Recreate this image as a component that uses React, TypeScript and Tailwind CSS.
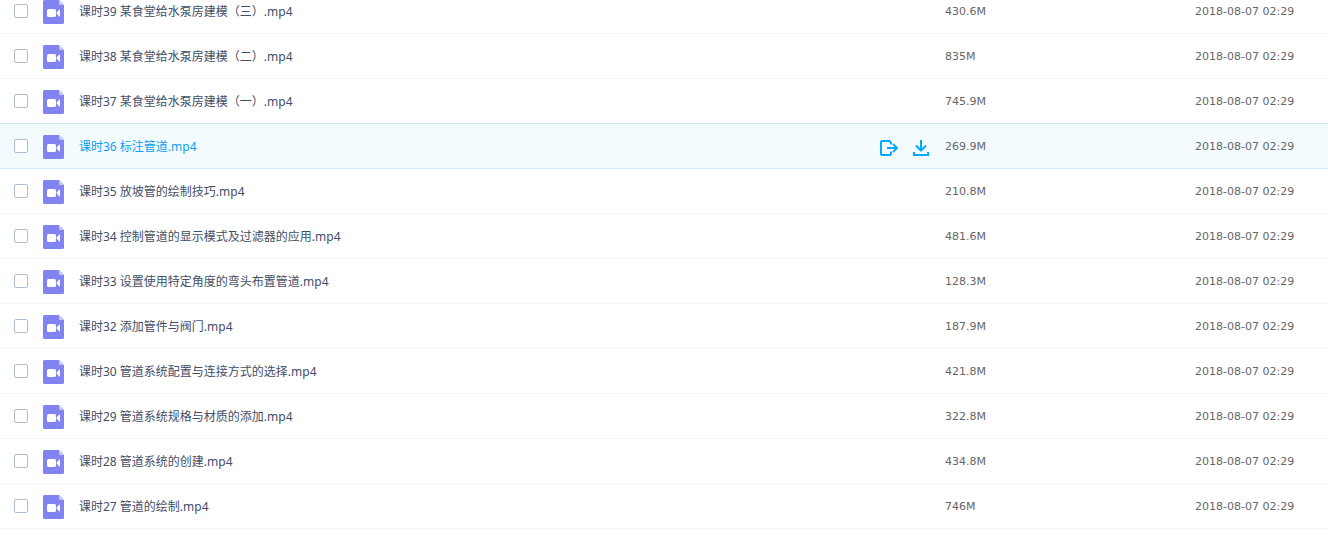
import React from 'react';

interface VideoFile {
  name: string;
  size: string;
  date: string;
}

const files: VideoFile[] = [
  { name: '课时39 某食堂给水泵房建模（三）.mp4', size: '430.6M', date: '2018-08-07 02:29' },
  { name: '课时38 某食堂给水泵房建模（二）.mp4', size: '835M', date: '2018-08-07 02:29' },
  { name: '课时37 某食堂给水泵房建模（一）.mp4', size: '745.9M', date: '2018-08-07 02:29' },
  { name: '课时36 标注管道.mp4', size: '269.9M', date: '2018-08-07 02:29' },
  { name: '课时35 放坡管的绘制技巧.mp4', size: '210.8M', date: '2018-08-07 02:29' },
  { name: '课时34 控制管道的显示模式及过滤器的应用.mp4', size: '481.6M', date: '2018-08-07 02:29' },
  { name: '课时33 设置使用特定角度的弯头布置管道.mp4', size: '128.3M', date: '2018-08-07 02:29' },
  { name: '课时32 添加管件与阀门.mp4', size: '187.9M', date: '2018-08-07 02:29' },
  { name: '课时30 管道系统配置与连接方式的选择.mp4', size: '421.8M', date: '2018-08-07 02:29' },
  { name: '课时29 管道系统规格与材质的添加.mp4', size: '322.8M', date: '2018-08-07 02:29' },
  { name: '课时28 管道系统的创建.mp4', size: '434.8M', date: '2018-08-07 02:29' },
  { name: '课时27 管道的绘制.mp4', size: '746M', date: '2018-08-07 02:29' },
];

const activeIndex = 3;

const VideoIcon: React.FC = () => (
  <svg width="21" height="24" viewBox="0 0 21 24" className="shrink-0" aria-hidden="true">
    <path d="M1.5 0H16l5 5v17.5a1.5 1.5 0 0 1-1.5 1.5h-18A1.5 1.5 0 0 1 0 22.5v-21A1.5 1.5 0 0 1 1.5 0z" fill="#8183f1" />
    <path d="M16 0l5 5h-4a1 1 0 0 1-1-1z" fill="#c8c9fa" />
    <rect x="4" y="9" width="9" height="8" rx="1.5" fill="#fff" />
    <path d="M13.3 13L16 9.8q1-.8 1 .4v5.6q0 1.2-1 .4z" fill="#fff" />
  </svg>
);

const ShareIcon: React.FC = () => (
  <svg width="18" height="16" viewBox="0 0 18 16" fill="none" stroke="#06a7ff" strokeWidth="2" aria-hidden="true">
    <path d="M11 4.5V3L9.5 1H2a1 1 0 0 0-1 1v12a1 1 0 0 0 1 1h8a1 1 0 0 0 1-1v-2.5" />
    <path d="M7 8h10M13 4l4 4-4 4" strokeWidth="1.8" />
  </svg>
);

const DownloadIcon: React.FC = () => (
  <svg width="16" height="16" viewBox="0 0 16 16" fill="none" stroke="#06a7ff" strokeWidth="2" aria-hidden="true">
    <path d="M8 0v10M3 5.5L8 10.5l5-5" />
    <path d="M1 12v3h14v-3" />
  </svg>
);

const App: React.FC = () => {
  return (
    <div className="min-h-screen overflow-hidden bg-white font-['Noto_Sans','Noto_Sans_CJK_SC',sans-serif] text-xs">
      {/* The list is scrolled, so the first row is cut by the top edge */}
      <table className="-mt-[11px] w-full table-fixed border-separate border-spacing-0">
        <colgroup>
          <col />
          <col className="w-[250px]" />
          <col className="w-[133px]" />
        </colgroup>
        <tbody>
          {files.map((file, index) => {
            const active = index === activeIndex;
            const highlighted = active || index === activeIndex - 1;
            const cell = `h-[45px] border-b p-0 pt-0.5 ${highlighted ? 'border-[#cfe9fb]' : 'border-[#f2f6fd]'}`;
            const meta = "font-['DejaVu_Sans',sans-serif] text-[11px] text-[#666]";
            return (
              <tr key={file.name} className={active ? 'bg-[#f3fbff]' : 'bg-white'}>
                <td className={cell}>
                  <div className="flex items-center pr-4 pl-[14px]">
                    <input
                      type="checkbox"
                      aria-label={file.name}
                      className="mr-[15px] mb-0.5 size-[14px] shrink-0 appearance-none rounded-xs border border-[#afbdd3] bg-white"
                    />
                    <VideoIcon />
                    <a
                      href="#"
                      className={`ml-[15px] min-w-0 flex-1 truncate ${active ? 'text-[#0a9ff0]' : 'text-[#424e67]'}`}
                    >
                      {file.name}
                    </a>
                    {active && (
                      <div className="mt-0.5 flex items-center gap-[15px]">
                        <button type="button" aria-label="分享">
                          <ShareIcon />
                        </button>
                        <button type="button" aria-label="下载">
                          <DownloadIcon />
                        </button>
                      </div>
                    )}
                  </div>
                </td>
                <td className={`${cell} ${meta}`}>{file.size}</td>
                <td className={`${cell} ${meta}`}>{file.date}</td>
              </tr>
            );
          })}
        </tbody>
      </table>
    </div>
  );
};

export default App;
